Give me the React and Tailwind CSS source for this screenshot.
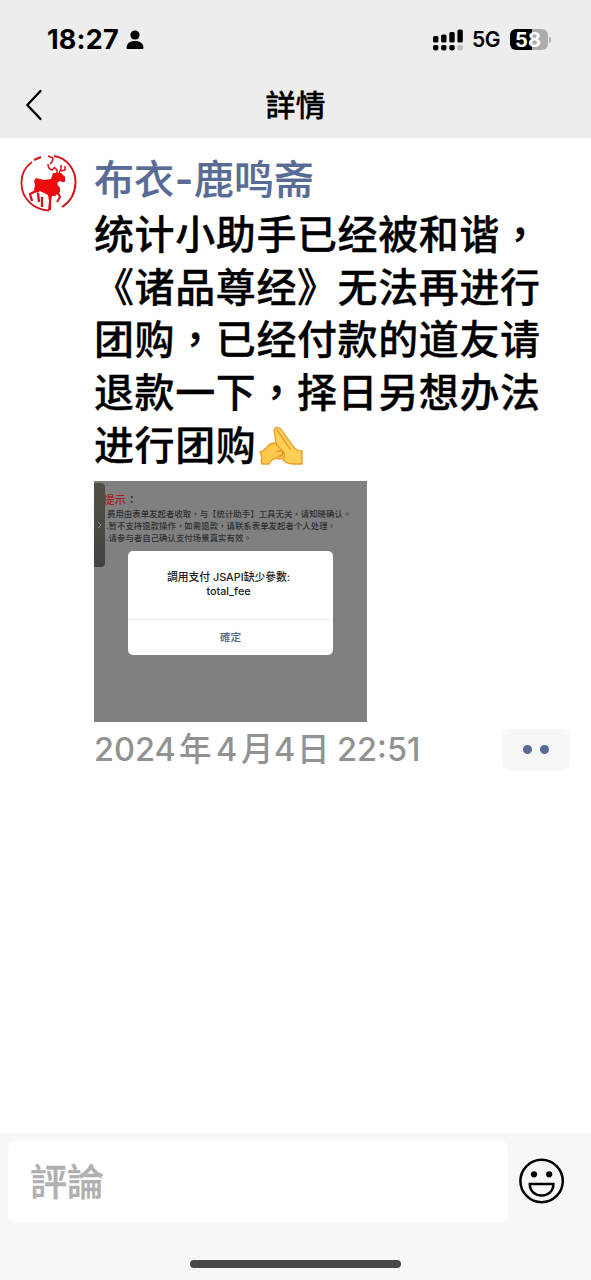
const Comma = () => <span className="font-['Noto_Sans_CJK_TC',sans-serif]">，</span>;

function StatusBar() {
  return (
    <div className="flex h-[72px] items-center justify-between pt-2 pr-[40px] pl-[47px]">
      <div className="flex items-center gap-[7px]">
        <span className="w-[72px] font-['Inter',sans-serif] text-[27px] leading-8 font-bold tracking-[0.2px] whitespace-nowrap">18:27</span>
        <svg width="18" height="20" viewBox="0 0 18 20">
          <circle cx="9" cy="5" r="4.6" />
          <path d="M0.5 18 C0.5 13.5 4 11 9 11 S17.5 13.5 17.5 18 Q17.5 19 16.5 19 H1.5 Q0.5 19 0.5 18Z" />
        </svg>
      </div>
      <div className="flex items-center">
        <svg className="mb-px" width="31" height="22" viewBox="0 0 31 22">
          <rect x="0" y="7" width="5.4" height="6.5" rx="1.6" />
          <rect x="8.1" y="5.5" width="5.4" height="8" rx="1.6" />
          <rect x="16.3" y="3" width="5.4" height="10.5" rx="1.6" />
          <rect x="24.4" y="0.5" width="5.4" height="13" rx="1.6" />
          <rect x="0" y="16" width="5.4" height="5.4" rx="1.8" />
          <rect x="8.1" y="16" width="5.4" height="5.4" rx="1.8" />
          <rect x="16.3" y="16" width="5.4" height="5.4" rx="1.8" />
          <rect x="24.4" y="16" width="5.4" height="5.4" rx="1.8" fill="#bdbdbd" />
        </svg>
        <span className="mr-px ml-[8px] w-[29px] font-['Inter',sans-serif] text-[21px] leading-6 font-semibold tracking-[-0.5px] whitespace-nowrap">5G</span>
        <div className="mb-px ml-[8px] flex h-[21px] w-[38px] items-center justify-center rounded-[6px] bg-[linear-gradient(90deg,#000_58%,#acacac_58%)] pr-[2px] font-['Inter',sans-serif] text-[20px] leading-none font-bold text-white">58</div>
        <div className="ml-[1px] h-[6px] w-[2px] rounded-r-full bg-[#acacac]" />
      </div>
    </div>
  );
}

function Avatar() {
  return (
    <svg className="mt-[15px] ml-5 h-[60px] w-[58px] shrink-0" viewBox="0 0 58 60" fill="none" stroke="#d51216" strokeLinejoin="round">
      <path d="M12 9 C5 14 1 22 1.5 31 C2 46 14 57 29 57.5" strokeWidth="1.8" />
      <path d="M34 3 C48 5 56 18 55.5 30 C55 42 50 49 42 54" strokeWidth="2" />
      <path d="M14 7 L21 4" strokeWidth="2" />
      <path d="M28 3 L33 5 Q33 9 30 11 M28 11 Q28 16 32 17 L35 14 M37 21 V17 L34 14 M39 20 L41 16 V12 M41 18 L45 17 V13" strokeWidth="1.5" />
      <path fill="#ed0b10" stroke="none" d="M33 20 L41 20 L45 24 L45 29 L39 28 L37 31 L40 35 L40 39 L35 43 L32 43 L31 48 L31 57 L28 57 L29 48 L28 42 L20 38 L17 40 L14 37 L15 32 L14 28 L16 25 L24 27 L31 26Z" />
      <path d="M16 38 L10 41 L12 48 M18 40 L19 49 M22 44 V54" strokeWidth="2.3" />
      <path d="M37 38 L40 44 L37 49 M41 24 L43 29" strokeWidth="2" />
      <path fill="#ed0b10" stroke="none" d="M40 21 L45 24 L44.5 28 L39 27Z" />
    </svg>
  );
}

function Hands() {
  return (
    <svg className="ml-[3px] inline-block h-[42px] w-[44px] align-[-8px]" viewBox="0 0 44 42" strokeLinejoin="round" strokeLinecap="round">
      <path d="M20 2 Q16 0 15 4 L17 17 L20 27 Q24 38 34 38 H43 V25 Q37 25 34 20 L22 3Z" fill="#ffcf55" stroke="#ec9a2b" strokeWidth="1.3" />
      <path d="M1 26 Q5 25 8 21 Q11 17 16 17 L21 22 Q28 29 24 32 Q20 34 18 32 Q12 33 10 38 H3 L2 35 Q4 32 1 26Z" fill="#ffca4b" stroke="#ec9a2b" strokeWidth="1.3" />
      <path d="M18 4 L31 23 M18 26 Q23 23 24 27 Q23 31 19 30" fill="none" stroke="#e18b25" strokeWidth="1.2" />
    </svg>
  );
}

function SharedShot() {
  return (
    <div className="relative mt-[11px] h-[241px] w-[273px] overflow-hidden bg-[#808080] text-[#303030]">
      <div className="pt-[10px] pl-[9px] font-['Noto_Sans_CJK_TC',sans-serif] text-[11.5px] leading-[16px] font-medium text-[#a51f22]">提示<span className="text-[#303030]">：</span></div>
      <div className="pl-[13px] font-['Noto_Sans_CJK_TC',sans-serif] text-[8.4px] leading-[12.3px] font-medium whitespace-nowrap">
        <p className="tracking-[0.05px]">费用由表单发起者收取，与【统计助手】工具无关，请知晓确认。</p>
        <p className="-ml-px tracking-[0.05px]">.暂不支持退款操作，如需退款，请联系表单发起者个人处理。</p>
        <p className="-ml-px tracking-[0.05px]">.请参与者自己确认支付场景真实有效。</p>
      </div>
      <div className="absolute top-[2px] left-0 flex h-[84px] w-[11px] items-center justify-center rounded-r-[4px] bg-linear-to-b from-[#515146] to-[#44433f]">
        <svg width="5" height="8" viewBox="0 0 5 8" fill="none" stroke="#89897f"><path d="M1 1 L4 4 L1 7" /></svg>
      </div>
      <div className="absolute top-[70px] left-[34px] flex h-[104px] w-[205px] flex-col rounded-[5px] bg-white text-center font-['Inter','Noto_Sans_CJK_TC',sans-serif] text-[#202020]">
        <div className="flex h-[69px] flex-col justify-center border-b border-[#ededed] text-[10.8px] leading-[14px] font-medium">
          <p className="pr-1 whitespace-nowrap">調用支付 JSAPI缺少參數:</p>
          <p className="pr-1">total_fee</p>
        </div>
        <div className="flex h-[35px] items-center justify-center pt-[2px] text-[10.7px] font-medium text-[#52658e]">確定</div>
      </div>
    </div>
  );
}

export default function App() {
  return (
    <div className="flex h-[1280px] w-[591px] flex-col overflow-hidden bg-white font-['Noto_Sans_CJK_SC',sans-serif] text-black">
      <header className="h-[138px] shrink-0 bg-[#ededed]">
        <StatusBar />
        <div className="grid h-[66px] grid-cols-[80px_1fr_80px] items-center">
          <svg className="ml-[25px]" width="18" height="32" viewBox="0 0 18 32" fill="none" stroke="currentColor" strokeWidth="2.4" strokeLinecap="round" strokeLinejoin="round"><path d="M15.5 2 L2.3 16 L15.5 30" /></svg>
          <h1 className="mb-[4px] text-center font-['Noto_Sans_CJK_TC',sans-serif] text-[30px] leading-10 font-medium [-webkit-text-stroke:0.3px_currentColor]">詳情</h1>
        </div>
      </header>
      <main className="flex flex-1">
        <Avatar />
        <div className="ml-4 w-[497px]">
          <h2 className="mt-[12px] h-[56px] text-[40px] leading-[54px] font-medium whitespace-nowrap text-[#576b95] [-webkit-text-stroke:0.2px_currentColor]">布衣<span className="inline-block w-[20px] text-center font-['Inter',sans-serif] font-semibold">-</span>鹿鸣斋</h2>
          <div className="text-[40px] leading-[52.7px] font-medium tracking-[0.6px] whitespace-nowrap [-webkit-text-stroke:0.3px_currentColor]">
            <p>统计小助手已经被和谐<Comma /></p>
            <p>《诸品尊经》无法再进行</p>
            <p>团购<Comma />已经付款的道友请</p>
            <p>退款一下<Comma />择日另想办法</p>
            <p className="h-[53px]">进行团购<Hands /></p>
          </div>
          <SharedShot />
          <div className="mt-[7px] flex h-[42px] items-center justify-between pr-[21px]">
            <time className="flex items-center font-['Inter','Noto_Sans_CJK_TC',sans-serif] text-[32.5px] leading-[42px] font-medium whitespace-nowrap text-[#929292]">
              <span className="w-[85px]">2024</span>
              <span className="w-[37px]">年</span>
              <span className="w-[25px]">4</span>
              <span className="w-[33px]">月</span>
              <span className="w-[23px]">4</span>
              <span className="w-[40px]">日</span>
              <span>22:51</span>
            </time>
            <button aria-label="More" className="flex h-[42px] w-[68px] items-center justify-center gap-2 rounded-[8px] bg-[#f7f7f7]">
              <span className="size-[9px] rounded-full bg-[#576b95]" />
              <span className="size-[9px] rounded-full bg-[#576b95]" />
            </button>
          </div>
        </div>
      </main>
      <footer className="flex h-[147px] shrink-0 flex-col bg-[#f7f7f7]">
        <div className="flex items-center pt-2 pl-2">
          <div className="flex h-[82px] w-[500px] items-center rounded-[8px] bg-white pl-[22px] font-['Noto_Sans_CJK_TC',sans-serif] text-[37px] font-medium text-[#b0b0b0] [-webkit-text-stroke:0.4px_currentColor]"><span className="mb-[3px]">評論</span></div>
          <svg className="mb-[3px] ml-[11px]" width="46" height="46" viewBox="0 0 46 46" fill="none" stroke="currentColor" strokeWidth="2.5">
            <circle cx="22.6" cy="23" r="21.2" />
            <circle cx="15" cy="16.3" r="3.1" fill="currentColor" stroke="none" />
            <circle cx="30.2" cy="16.3" r="3.1" fill="currentColor" stroke="none" />
            <path d="M10.8 26 H34.4 C34.4 33 29.5 37.5 22.6 37.5 S10.8 33 10.8 26Z" />
          </svg>
        </div>
        <div className="mt-[37px] ml-[190px] h-2 w-[211px] rounded-full bg-[#484848]" />
      </footer>
    </div>
  );
}
